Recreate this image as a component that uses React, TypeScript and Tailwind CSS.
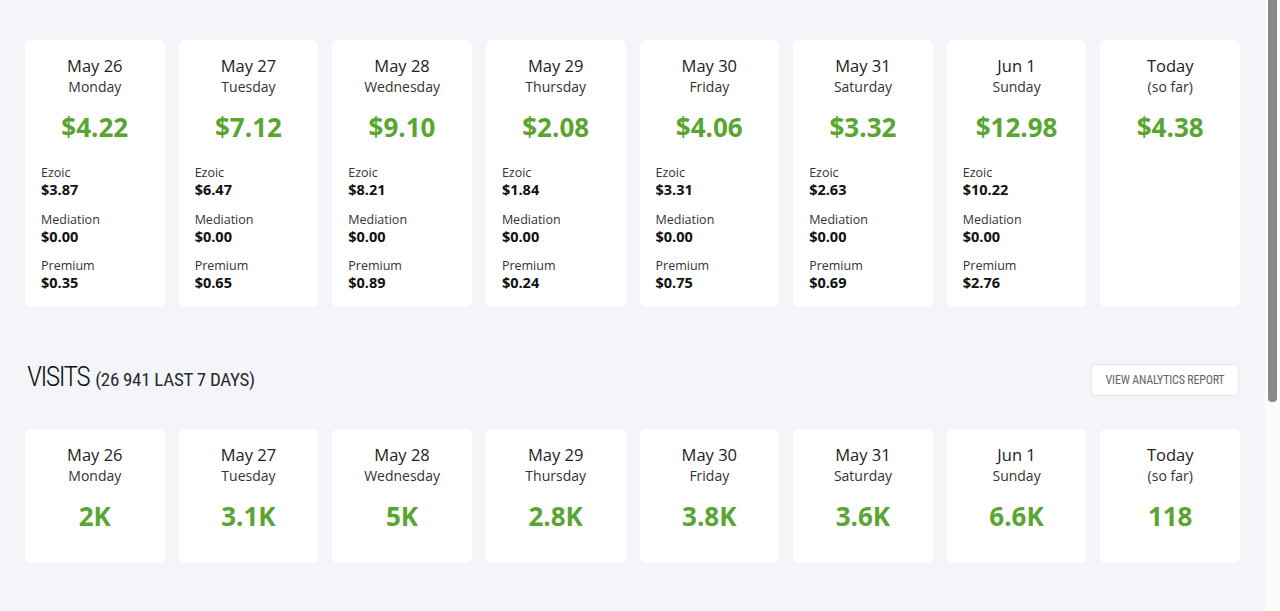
const earnings = [
  { date: "May 26", day: "Monday", total: "$4.22", ezoic: "$3.87", mediation: "$0.00", premium: "$0.35" },
  { date: "May 27", day: "Tuesday", total: "$7.12", ezoic: "$6.47", mediation: "$0.00", premium: "$0.65" },
  { date: "May 28", day: "Wednesday", total: "$9.10", ezoic: "$8.21", mediation: "$0.00", premium: "$0.89" },
  { date: "May 29", day: "Thursday", total: "$2.08", ezoic: "$1.84", mediation: "$0.00", premium: "$0.24" },
  { date: "May 30", day: "Friday", total: "$4.06", ezoic: "$3.31", mediation: "$0.00", premium: "$0.75" },
  { date: "May 31", day: "Saturday", total: "$3.32", ezoic: "$2.63", mediation: "$0.00", premium: "$0.69" },
  { date: "Jun 1", day: "Sunday", total: "$12.98", ezoic: "$10.22", mediation: "$0.00", premium: "$2.76" },
  { date: "Today", day: "(so far)", total: "$4.38" },
];

const visits = [
  { date: "May 26", day: "Monday", value: "2K" },
  { date: "May 27", day: "Tuesday", value: "3.1K" },
  { date: "May 28", day: "Wednesday", value: "5K" },
  { date: "May 29", day: "Thursday", value: "2.8K" },
  { date: "May 30", day: "Friday", value: "3.8K" },
  { date: "May 31", day: "Saturday", value: "3.6K" },
  { date: "Jun 1", day: "Sunday", value: "6.6K" },
  { date: "Today", day: "(so far)", value: "118" },
];

const narrow = { fontFamily: '"Liberation Sans Narrow", "Roboto Condensed", "Liberation Sans", sans-serif' };

const Breakdown = ({ label, value }: { label: string; value?: string }) => (
  <div className="mb-[11.5px]">
    <div className="text-[12.5px] leading-[17px] text-[#333]">{label}</div>
    <div className="text-[14.5px] leading-[18px] font-bold text-[#111]">{value}</div>
  </div>
);

const DayHead = ({ date, day }: { date: string; day: string }) => (
  <div className="text-center">
    <div className="text-[16.5px] leading-[21px] text-[#222]">{date}</div>
    <div className="text-[14px] leading-[21px] text-[#333]">{day}</div>
  </div>
);

export default function App() {
  return (
    <div
      className="flex w-[1280px] h-[611px] overflow-hidden bg-[#f3f5f9]"
      style={{ fontFamily: '"Open Sans", "Noto Sans", sans-serif' }}
    >
      <div className="w-[1265px] px-[25px] pt-[40px]">
        <div className="grid grid-cols-8 gap-[14px]">
          {earnings.map((e) => (
            <div key={e.date} className="bg-white rounded-[6px] h-[267px] pt-[15px] px-[16px]">
              <DayHead date={e.date} day={e.day} />
              <div className="text-center text-[26px] leading-[34px] font-bold text-[#5aa531] mt-[13px]">
                {e.total}
              </div>
              {e.ezoic && (
                <div className="mt-[20px]">
                  <Breakdown label="Ezoic" value={e.ezoic} />
                  <Breakdown label="Mediation" value={e.mediation} />
                  <Breakdown label="Premium" value={e.premium} />
                </div>
              )}
            </div>
          ))}
        </div>

        <div className="flex items-center justify-between mt-[57px] h-[32px]">
          <div className="flex items-baseline pl-[2px] -mt-[6px] text-[#111]" style={narrow}>
            <span className="text-[28px] font-light tracking-[-1.6px]">VISITS</span>
            <span className="ml-[6px] text-[19px] tracking-[-0.3px] text-[#2a2a2a]">(26 941 LAST 7 DAYS)</span>
          </div>
          <button
            className="h-[32px] w-[148px] mr-[1px] bg-white border border-[#e4e7ec] rounded-[4px] text-[12px] text-[#666] tracking-[-0.2px]"
            style={narrow}
          >
            VIEW ANALYTICS REPORT
          </button>
        </div>

        <div className="grid grid-cols-8 gap-[14px] mt-[33px]">
          {visits.map((v) => (
            <div key={v.date} className="bg-white rounded-[6px] h-[134px] pt-[15px] px-[16px]">
              <DayHead date={v.date} day={v.day} />
              <div className="text-center text-[26px] leading-[34px] font-bold text-[#5aa531] mt-[13px]">
                {v.value}
              </div>
            </div>
          ))}
        </div>
      </div>
      <div className="w-[15px] h-full bg-[#fbfbfb] pl-[3px]">
        <div className="w-[9px] h-[402px] bg-[#8a8a8a] rounded-b-[4px]" />
      </div>
    </div>
  );
}
